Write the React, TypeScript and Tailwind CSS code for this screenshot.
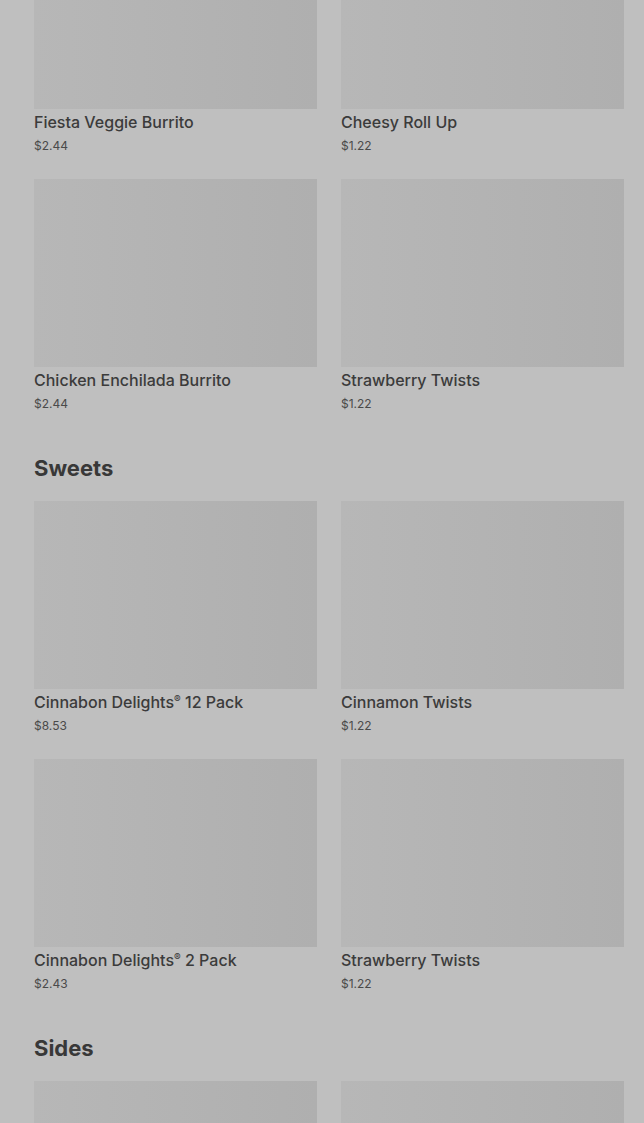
import React from 'react';

type Item = { name: string; price: string };

const sections: { title?: string; items: Item[] }[] = [
  {
    items: [
      { name: 'Fiesta Veggie Burrito', price: '$2.44' },
      { name: 'Cheesy Roll Up', price: '$1.22' },
      { name: 'Chicken Enchilada Burrito', price: '$2.44' },
      { name: 'Strawberry Twists', price: '$1.22' },
    ],
  },
  {
    title: 'Sweets',
    items: [
      { name: 'Cinnabon Delights® 12 Pack', price: '$8.53' },
      { name: 'Cinnamon Twists', price: '$1.22' },
      { name: 'Cinnabon Delights® 2 Pack', price: '$2.43' },
      { name: 'Strawberry Twists', price: '$1.22' },
    ],
  },
  {
    title: 'Sides',
    items: [],
  },
];

function Name({ text }: { text: string }) {
  const parts = text.split('®');
  if (parts.length === 1) return <>{text}</>;
  return (
    <>
      {parts[0]}
      <span className="relative top-[-5px] text-[10px] leading-none">®</span>
      {parts[1]}
    </>
  );
}

function Card({ item }: { item: Item }) {
  return (
    <div className="flex flex-col">
      <div className="h-[188px] bg-gradient-to-r from-[#b7b7b7] to-[#afafaf]" />
      <div className="mt-[3px] h-[20px] text-[16px] leading-[20px] font-medium text-[#3b3b3b]">
        <Name text={item.name} />
      </div>
      <div className="mt-[5px] text-[12px] leading-[18px] text-[#4a4a4a]">{item.price}</div>
    </div>
  );
}

export default function App() {
  return (
    <div className="w-[644px] h-[1123px] overflow-hidden bg-[#bfbfbf]" style={{ fontFamily: 'Inter, "Noto Sans", sans-serif' }}>
      <div className="-mt-[79px] pl-[34px] pr-[20px]">
        {sections.map((s, i) => (
          <section key={i} className={i > 0 ? 'mt-[39px]' : ''}>
            {s.title && (
              <h2 className="text-[22px] leading-[32px] font-bold text-[#383838] mb-[17px]">{s.title}</h2>
            )}
            <div className="grid grid-cols-2 gap-x-[24px] gap-y-[24px]">
              {s.items.length > 0
                ? s.items.map((it, j) => <Card key={j} item={it} />)
                : [0, 1].map((j) => (
                    <div key={j} className="h-[188px] bg-gradient-to-r from-[#b7b7b7] to-[#afafaf]" />
                  ))}
            </div>
          </section>
        ))}
      </div>
    </div>
  );
}
